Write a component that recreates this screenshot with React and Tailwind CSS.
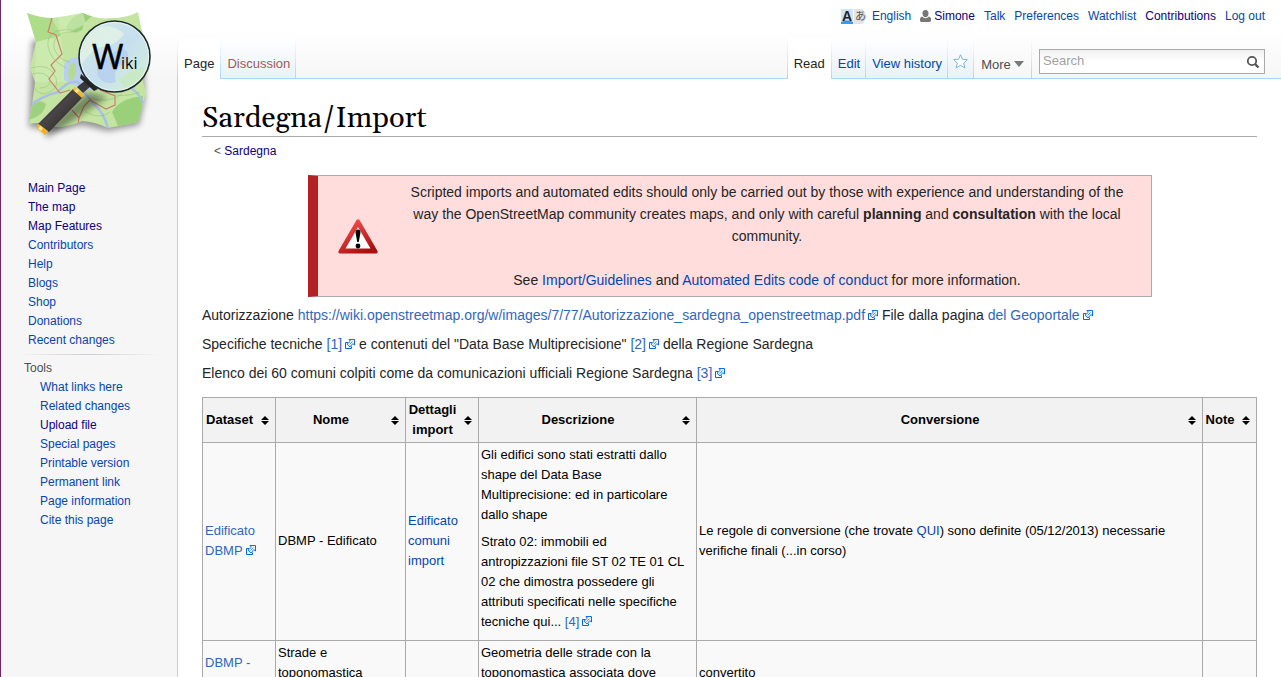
import React from "react";

const LINK = "text-[#0645ad] hover:underline";
const VISITED = "text-[#0b0080] hover:underline";
const EXTERNAL = "text-[#3366bb] hover:underline";

function Logo() {
  return (
    <svg width="136" height="136" viewBox="22 8 136 136" aria-hidden="true">
      <defs>
        <filter id="soft" x="-20%" y="-20%" width="140%" height="140%">
          <feGaussianBlur stdDeviation="3" />
        </filter>
        <clipPath id="sheet">
          <path d="M27 13 Q40 18 52 18 Q68 16 83 13 Q97 20 111 18 Q127 18 138 12 L145 46 Q138 70 146 92 L138 122 Q124 125 108 128 Q96 122 82 121 Q70 127 56 127 Q42 121 29 124 Q33 100 35 82 L30 68 L36 42 Z" />
        </clipPath>
        <linearGradient id="glass" x1="0" y1="0" x2="1" y2="1">
          <stop offset="0" stopColor="#d3ebdc" />
          <stop offset="0.5" stopColor="#c6dff0" />
          <stop offset="1" stopColor="#d6f0d2" />
        </linearGradient>
        <linearGradient id="handle" x1="0" y1="0" x2="1" y2="1">
          <stop offset="0" stopColor="#111" />
          <stop offset="0.45" stopColor="#4a4446" />
          <stop offset="1" stopColor="#1a1a1a" />
        </linearGradient>
      </defs>
      <path d="M32 40 L143 46 L145 98 L139 125 L108 131 L82 125 L56 131 L29 127 Z" fill="#000" opacity="0.4" filter="url(#soft)" />
      <g clipPath="url(#sheet)">
        <rect x="22" y="8" width="130" height="125" fill="#c3e5a1" />
        <path d="M27 13 L52 18 L61 36 L36 42 Z" fill="#aedd89" />
        <path d="M36 42 L61 36 L66 82 L35 82 Z" fill="#cbeaad" />
        <path d="M66 28 Q72 14 86 12 L96 14 Q84 20 82 30 Q74 35 66 28 Z" fill="#9bcf7d" />
        <path d="M58 17 L83 13 L86 24 L61 36 Z" fill="#d3edb8" opacity="0.6" />
        <path d="M30 107 Q40 98 46 104 Q44 114 34 118 L29 120 Z" fill="#9ed17f" />
        <path d="M112 112 Q120 98 143 96 L140 124 L118 126 Z" fill="#9bd07b" />
        <path d="M64 68 Q64 58 78 57 L90 74 L104 80 Q96 92 84 90 Q72 84 64 80 Z" fill="#b9cfee" />
        <path d="M69 68 Q71 60 76 65 Q77 78 71 81 Q67 78 69 68 Z" fill="#b3dc92" />
        <path d="M28 107 Q42 96 58 92 Q68 80 78 82 Q86 96 94 104 Q104 113 108 128" fill="none" stroke="#a9bfe6" strokeWidth="2.5" />
        <path d="M124 84 Q138 90 144 104" fill="none" stroke="#a9bfe6" strokeWidth="2" />
        <path d="M72 30 Q46 28 48 46 Q50 60 66 68 M78 32 Q52 30 54 48 Q58 60 70 62 M31 68 Q50 62 56 78 Q60 90 44 94 Q32 92 34 80 M32 74 Q46 70 50 80 Q50 88 40 88 M88 98 Q110 104 122 94 M100 90 Q120 100 140 92 M86 112 Q100 120 110 112" fill="none" stroke="#8db173" strokeWidth="0.6" opacity="0.7" />
        <path d="M52 18 L48 32 L56 35 L62 54 L51 65 L55 71 L49 79 L60 93 L70 90 M72 110 L79 118 L84 106 L90 100 L106 109 L115 105 L115 96 L100 90 M79 118 L78 124" fill="none" stroke="#cf7f6c" strokeWidth="1.2" />
      </g>
      <path d="M44 130 L88 92 L108 97 L62 128 L47 138 Z" fill="#000" opacity="0.4" filter="url(#soft)" />
      <path d="M86 80 L91 86 L83 93 L77 87 Z" fill="#3b3839" />
      <path d="M81 74 L98 89 L94 91 L80 78 Z" fill="#242424" />
      <path d="M73 89 L83 97 L49 132 L38 124 Z" fill="url(#handle)" />
      <path d="M75 87 L84 95 L82 98 L73 90 Z" fill="#f2b632" />
      <path d="M76.5 88.5 L79 90.5 L77 93 L74.5 91 Z" fill="#ffe68a" />
      <path d="M38 123.5 L48 131 L45 135 L36.5 128 Z" fill="#eeb02c" />
      <path d="M40 125.5 L43 128 L41 131 L38 128.5 Z" fill="#ffe68a" />
      <circle cx="114.5" cy="56.5" r="35.5" fill="url(#glass)" stroke="#222a2c" strokeWidth="1.6" />
      <path d="M84 44 Q90 30 104 26 Q116 26 124 34 Q116 46 98 48 Q88 54 82 64 Q79 54 84 44 Z" fill="#e2f3e6" opacity="0.8" />
      <path d="M118 50 Q130 46 128 62 Q112 66 116 82 Q104 86 98 76 Q94 66 106 58 Z" fill="#adc8f0" opacity="0.6" />
      <path d="M118 80 Q132 68 146 68 Q140 82 126 88 Z" fill="#c7eabb" opacity="0.7" />
      <circle cx="114.5" cy="56.5" r="34" fill="none" stroke="#f2fbf6" strokeWidth="1" opacity="0.7" />
      <text x="92" y="69" fontFamily="Open Sans, sans-serif" fontSize="34" fill="#000" stroke="#000" strokeWidth="0.5">W</text>
      <text x="121" y="69" fontFamily="Open Sans, sans-serif" fontSize="16" fill="#000">iki</text>
    </svg>
  );
}

function ExternalIcon() {
  return (
    <svg className="ml-[3px] inline-block align-baseline" width="10" height="10" viewBox="0 0 10 10" aria-hidden="true">
      <path d="M3 3.5H0.5V9.5H6.5V7.5" fill="#fff" stroke="#0066dd" />
      <path d="M4 0.5H9.5V6L7.8 4.6L5 8L2 5.2L5.4 2.2Z" fill="#fff" stroke="#0a6cf0" />
      <path d="M4.5 5.5L7.5 2.5" stroke="#0a6cf0" strokeWidth="0.8" />
    </svg>
  );
}

function SortIcon() {
  return (
    <svg className="shrink-0" width="8" height="9" viewBox="0 0 8 9" aria-hidden="true">
      <path d="M4 0L8 4H0ZM4 9L0 5H8Z" fill="#000" />
    </svg>
  );
}

function WarningIcon() {
  return (
    <svg width="40" height="35" viewBox="0 0 40 35" aria-hidden="true">
      <defs>
        <linearGradient id="warn" x1="0" y1="0" x2="0.6" y2="1">
          <stop offset="0.2" stopColor="#f24a4a" />
          <stop offset="1" stopColor="#a81010" />
        </linearGradient>
      </defs>
      <path d="M18.5 1Q20 -0.5 21.5 1L39.5 32Q40 34 38.5 34.5H1.5Q0 34 0.5 32Z" fill="url(#warn)" />
      <path d="M20 8L32.5 29.5H7.5Z" fill="#fff" />
      <path d="M20 10.5Q22.8 10.5 22.4 14L20.8 23H19.2L17.6 14Q17.2 10.5 20 10.5Z" fill="#000" />
      <circle cx="20" cy="27" r="2.4" fill="#000" />
    </svg>
  );
}

function Sep() {
  return <div className="w-px shrink-0 bg-linear-to-b from-white to-[#a7d7f9]" />;
}

function Tab({ active, children, className = "text-[#0645ad]" }) {
  return (
    <div
      className={
        active
          ? "flex items-end bg-white px-[6px] pb-[6px]"
          : "flex items-end border-b border-[#a7d7f9] bg-linear-to-b from-white to-[#e8f2f8] pb-[5px] pl-[6px] pr-[5px]"
      }
    >
      <a href="#" className={active ? "text-[#252525]" : className}>
        {children}
      </a>
    </div>
  );
}

const NAV = [
  ["Main Page", true],
  ["The map", true],
  ["Map Features", true],
  ["Contributors"],
  ["Help"],
  ["Blogs"],
  ["Shop"],
  ["Donations"],
  ["Recent changes"],
];

const TOOLS = [
  ["What links here"],
  ["Related changes"],
  ["Upload file", true],
  ["Special pages"],
  ["Printable version"],
  ["Permanent link"],
  ["Page information"],
  ["Cite this page"],
];

function LinkList({ items, className }) {
  return (
    <ul className={className}>
      {items.map(([label, visited]) => (
        <li key={label}>
          <a href="#" className={visited ? VISITED : LINK}>
            {label}
          </a>
        </li>
      ))}
    </ul>
  );
}

function Sidebar() {
  return (
    <aside className="w-[177px] shrink-0 border-l border-[#6b2a66] bg-linear-to-b from-white from-[30px] to-[#f6f6f6] to-[78px] text-[12px] leading-[19px]">
      <a href="#" aria-label="Main Page" className="ml-[21px] mt-[8px] block w-[136px]">
        <Logo />
      </a>
      <nav aria-label="Navigation" className="mt-[35px]">
        <LinkList items={NAV} className="pl-[27px]" />
      </nav>
      <div className="mx-[18px] mt-[4px] h-px bg-linear-to-r from-[#f6f6f6] via-[#c8ccd1] to-[#f6f6f6]" />
      <nav aria-label="Tools" className="mt-[4px]">
        <h3 className="pl-[23px] text-[#4d4d4d]">Tools</h3>
        <LinkList items={TOOLS} className="pl-[39px]" />
      </nav>
    </aside>
  );
}

function PersonalBar() {
  return (
    <div className="flex h-[38px] items-start justify-end gap-[9px] pr-4 pt-[8px] text-[12px] leading-4">
      <a href="#" className="flex items-center gap-[5px] text-[#0645ad]">
        <svg width="26" height="15" viewBox="0 0 26 15" aria-hidden="true">
          <rect width="12" height="15" fill="#cfe3f5" />
          <path d="M0 15V13L4 11.5H8L12 13V15Z" fill="#3a9be0" />
          <path d="M13 0H22L26 7.5L22 15H13Z" fill="#e4e4e4" />
          <text x="1" y="12" fontFamily="Liberation Sans, sans-serif" fontWeight="bold" fontSize="14" fill="#222">A</text>
          <text x="14" y="11" fontFamily="Noto Sans CJK JP, sans-serif" fontSize="11" fill="#555">あ</text>
        </svg>
        English
      </a>
      <a href="#" className="flex items-center gap-[3px] text-[#0b0080]">
        <svg width="11" height="12" viewBox="0 0 11 12" aria-hidden="true">
          <path d="M5.5 0C8 0 8.7 1.8 8.5 3.8C8.3 6 7.2 7.2 5.5 7.2S2.7 6 2.5 3.8C2.3 1.8 3 0 5.5 0Z" fill="#777" />
          <path d="M2 6.5Q0 7 0 9V10.5Q0 12 2 12H9Q11 12 11 10.5V9Q11 7 9 6.5Q7.5 8.3 5.5 8.3T2 6.5Z" fill="#777" />
        </svg>
        Simone
      </a>
      <a href="#" className={LINK}>Talk</a>
      <a href="#" className={LINK}>Preferences</a>
      <a href="#" className={LINK}>Watchlist</a>
      <a href="#" className={VISITED}>Contributions</a>
      <a href="#" className={LINK}>Log out</a>
    </div>
  );
}

function Header() {
  return (
    <header className="bg-linear-to-b from-white from-[30px] to-[#f6f6f6] to-[78px]">
      <PersonalBar />
      <div className="flex h-[41px] text-[13px] leading-[18px]">
        <Sep />
        <Tab active>Page</Tab>
        <Sep />
        <Tab className="text-[#a55858]">Discussion</Tab>
        <Sep />
        <div className="flex-1 border-b border-[#a7d7f9]" />
        <Sep />
        <Tab active>Read</Tab>
        <Sep />
        <Tab>Edit</Tab>
        <Sep />
        <Tab>View history</Tab>
        <Sep />
        <button type="button" aria-label="Watch" className="flex w-[25px] items-center justify-center border-b border-[#a7d7f9] bg-linear-to-b from-white to-[#e8f2f8] pt-[6px]">
          <svg width="15" height="15" viewBox="0 0 15 15" aria-hidden="true">
            <path d="M7.5 0.8L9.5 5.3L14.3 5.7L10.7 9L11.8 13.9L7.5 11.3L3.2 13.9L4.3 9L0.7 5.7L5.5 5.3Z" fill="#fff" stroke="#7cb5d8" strokeLinejoin="round" />
          </svg>
        </button>
        <Sep />
        <button type="button" className="flex w-[57px] items-end justify-center gap-[3px] border-b border-[#a7d7f9] pb-[4px] text-[#4d4d4d]">
          More
          <svg className="mb-[7px]" width="10" height="6" viewBox="0 0 10 6" aria-hidden="true">
            <path d="M0 0H10L5 6Z" fill="#797979" />
          </svg>
        </button>
        <Sep />
        <form className="border-b border-[#a7d7f9] pl-[7px] pr-4 pt-[11px]" onSubmit={(e) => e.preventDefault()}>
          <div className="flex h-[25px] w-[226px] items-start border border-[#aaa] bg-linear-to-b from-[#f0f0f0] to-white to-50% pl-[3px] pr-[4px] pt-[2px]">
            <input
              type="search"
              aria-label="Search"
              placeholder="Search"
              className="h-[18px] min-w-0 flex-1 bg-transparent text-[13px] leading-[18px] outline-none placeholder:text-[#a2a2a2]"
            />
            <button type="submit" aria-label="Go" className="pt-[3px]">
              <svg width="14" height="14" viewBox="0 0 14 14" aria-hidden="true">
                <circle cx="6" cy="6" r="4.2" fill="none" stroke="#555" strokeWidth="1.8" />
                <path d="M9 9L12.5 12.5" stroke="#555" strokeWidth="2.4" />
              </svg>
            </button>
          </div>
        </form>
      </div>
    </header>
  );
}

function Notice() {
  return (
    <div className="mx-auto flex w-4/5 items-center border border-l-[10px] border-[#aaa] border-l-[#b22222] bg-[#ffdddd] py-[5px]">
      <div className="flex w-20 shrink-0 justify-center">
        <WarningIcon />
      </div>
      <div className="flex-1 pl-[8px] pr-[22px] text-center">
        <p>
          Scripted imports and automated edits should only be carried out by those with experience and understanding of
          the way the OpenStreetMap community creates maps, and only with careful <b>planning</b> and{" "}
          <b>consultation</b> with the local community.
        </p>
        <p className="mt-[22px]">
          See <a href="#" className={LINK}>Import/Guidelines</a> and{" "}
          <a href="#" className={LINK}>Automated Edits code of conduct</a> for more information.
        </p>
      </div>
    </div>
  );
}

function Th({ children }) {
  return (
    <th className="border border-[#aaa] bg-[#f2f2f2] p-0">
      <button type="button" className="flex w-full items-center py-[2px] pl-px pr-[6px] font-bold">
        <span className="flex-1 pr-[6px] text-center">{children}</span>
        <SortIcon />
      </button>
    </th>
  );
}

const TD = "border border-[#aaa] px-[2px] pb-[4px] pt-[2px]";
const TD_TOP = "border border-[#aaa] px-[2px] py-[2px] align-top";

function DataTable() {
  return (
    <table className="mt-[13px] w-full table-fixed border-collapse border border-[#aaa] bg-[#f9f9f9] text-[13px] leading-5 text-black">
      <colgroup>
        <col className="w-[73px]" />
        <col className="w-[130px]" />
        <col className="w-[73px]" />
        <col className="w-[218px]" />
        <col />
        <col className="w-[54px]" />
      </colgroup>
      <thead>
        <tr>
          <Th>Dataset</Th>
          <Th>Nome</Th>
          <Th>Dettagli import</Th>
          <Th>Descrizione</Th>
          <Th>Conversione</Th>
          <Th>Note</Th>
        </tr>
      </thead>
      <tbody>
        <tr>
          <td className={TD}>
            <a href="#" className={EXTERNAL}>Edificato DBMP<ExternalIcon /></a>
          </td>
          <td className={TD}>DBMP - Edificato</td>
          <td className={TD}>
            <a href="#" className={LINK}>Edificato comuni import</a>
          </td>
          <td className={TD}>
            <p>Gli edifici sono stati estratti dallo shape del Data Base Multiprecisione: ed in particolare dallo shape</p>
            <p className="mb-[4px] mt-[7px]">
              Strato 02: immobili ed antropizzazioni file ST 02 TE 01 CL 02 che dimostra possedere gli attributi
              specificati nelle specifiche tecniche qui... <a href="#" className={EXTERNAL}>[4]<ExternalIcon /></a>
            </p>
          </td>
          <td className={TD}>
            Le regole di conversione (che trovate <a href="#" className={LINK}>QUI</a>) sono definite (05/12/2013)
            necessarie verifiche finali (...in corso)
          </td>
          <td className={TD} />
        </tr>
        <tr className="h-[67px]">
          <td className={TD}>
            <a href="#" className={EXTERNAL}>DBMP -<br /><ExternalIcon /></a>
          </td>
          <td className={TD_TOP}>Strade e toponomastica</td>
          <td className={TD} />
          <td className={TD_TOP}>Geometria delle strade con la toponomastica associata dove</td>
          <td className={TD}>convertito</td>
          <td className={TD} />
        </tr>
      </tbody>
    </table>
  );
}

export default function App() {
  return (
    <div className="flex min-h-screen bg-white font-['Liberation_Sans',Arial,sans-serif]">
      <Sidebar />
      <div className="flex min-w-0 flex-1 flex-col">
        <Header />
        <main className="flex-1 border-l border-[#a7d7f9] px-6 pb-6 pt-[23px] text-[14px] leading-[22px] text-[#252525]">
          <h1 className="border-b border-[#aaa] font-[Gelasio,Georgia,'Liberation_Serif',serif] text-[29px] leading-[34px] text-black">
            Sardegna/Import
          </h1>
          <p className="ml-[12px] mt-[5px] text-[12px] leading-[19px] text-[#545454]">
            &lt; <a href="#" className={VISITED}>Sardegna</a>
          </p>
          <div className="mt-[14px]">
            <Notice />
          </div>
          <p className="mt-[7px]">
            Autorizzazione{" "}
            <a href="#" className={EXTERNAL}>
              https://wiki.openstreetmap.org/w/images/7/77/Autorizzazione_sardegna_openstreetmap.pdf<ExternalIcon />
            </a>{" "}
            File dalla pagina <a href="#" className={EXTERNAL}>del Geoportale<ExternalIcon /></a>
          </p>
          <p className="mt-[7px]">
            Specifiche tecniche <a href="#" className={EXTERNAL}>[1]<ExternalIcon /></a> e contenuti del "Data Base
            Multiprecisione" <a href="#" className={EXTERNAL}>[2]<ExternalIcon /></a> della Regione Sardegna
          </p>
          <p className="mt-[7px]">
            Elenco dei 60 comuni colpiti come da comunicazioni ufficiali Regione Sardegna{" "}
            <a href="#" className={EXTERNAL}>[3]<ExternalIcon /></a>
          </p>
          <DataTable />
        </main>
      </div>
    </div>
  );
}
